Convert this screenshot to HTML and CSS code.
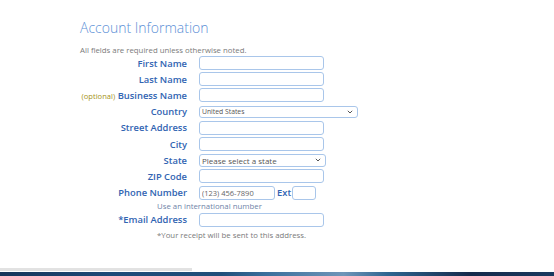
FILE: index.html
```html
<!DOCTYPE html>
<html lang="en">
<head>
    <meta charset="UTF-8">
    <meta name="viewport" content="width=device-width, initial-scale=1.0">
    <title>Checkout - Account Information</title>
    <link rel="stylesheet" href="styles.css">
</head>
<body>
    <div class="page">
        <div class="content">
            <h2 class="title">Account Information</h2>
            <p class="intro">All fields are required unless otherwise noted.</p>

            <form class="account-form">
                <label class="field-label">First Name</label>
                <div class="field"><input type="text" class="input"></div>

                <label class="field-label">Last Name</label>
                <div class="field"><input type="text" class="input"></div>

                <label class="field-label"><span class="optional">(optional)</span> Business Name</label>
                <div class="field"><input type="text" class="input"></div>

                <label class="field-label">Country</label>
                <div class="field">
                    <span class="select-wrap">
                        <select class="select select-small">
                            <option>United States</option>
                        </select>
                        <svg class="chevron" width="6" height="4" viewBox="0 0 6 4"><path d="M0.8 0.8 L3 3 L5.2 0.8" fill="none" stroke="#555" stroke-width="1"/></svg>
                    </span>
                </div>

                <label class="field-label">Street Address</label>
                <div class="field"><input type="text" class="input"></div>

                <label class="field-label">City</label>
                <div class="field"><input type="text" class="input"></div>

                <label class="field-label">State</label>
                <div class="field">
                    <span class="select-wrap">
                        <select class="select">
                            <option>Please select a state</option>
                        </select>
                        <svg class="chevron" width="6" height="4" viewBox="0 0 6 4"><path d="M0.8 0.8 L3 3 L5.2 0.8" fill="none" stroke="#555" stroke-width="1"/></svg>
                    </span>
                </div>

                <label class="field-label">ZIP Code</label>
                <div class="field"><input type="text" class="input"></div>

                <label class="field-label">Phone Number</label>
                <div class="field phone-field">
                    <input type="text" class="input input-phone" placeholder="(123) 456-7890">
                    <span class="ext-label">Ext</span>
                    <input type="text" class="input input-ext">
                </div>

                <div class="help-text">Use an international number</div>

                <label class="field-label">*Email Address</label>
                <div class="field"><input type="text" class="input"></div>

                <div class="help-text receipt-note">*Your receipt will be sent to this address.</div>
            </form>
        </div>

        <div class="scroll-track"></div>
        <div class="banner-strip"></div>
    </div>
</body>
</html>
```

FILE: styles.css
```css
body {
    margin: 0;
    font-family: "Open Sans", "Noto Sans", Arial, sans-serif;
    background-color: #fff;
}
.page {
    height: 276px;
    display: flex;
    flex-direction: column;
    overflow: hidden;
}
.content {
    flex: 1;
    padding: 0 0 0 80px;
}
.title {
    margin: 18px 0 0 0;
    font-size: 14px;
    font-weight: 300;
    color: #5b8fd6;
    line-height: 20px;
}
.intro {
    margin: 7px 0 0 0;
    font-size: 7.8px;
    color: #7a7a7a;
    line-height: 10px;
}
.account-form {
    display: grid;
    grid-template-columns: 107px auto;
    column-gap: 12px;
    align-items: center;
}
.field-label {
    text-align: right;
    font-size: 9.4px;
    font-weight: 600;
    color: #3164b2;
    white-space: nowrap;
}
.field-label .optional {
    font-size: 7.6px;
    font-weight: 400;
    color: #a59318;
}
.field {
    height: 16.2px;
    display: flex;
    align-items: center;
}
.input {
    box-sizing: border-box;
    width: 125px;
    height: 14px;
    border: 1px solid #a9c6ea;
    border-radius: 3px;
    padding: 0 2px;
    font-family: inherit;
    font-size: 7.5px;
    color: #555;
    outline: none;
}
.input::placeholder {
    color: #666;
}
.input-phone {
    width: 76px;
}
.ext-label {
    margin: 0 1px 0 2px;
    font-size: 9.4px;
    font-weight: 600;
    color: #3164b2;
}
.input-ext {
    width: 24px;
}
.select-wrap {
    position: relative;
    display: flex;
    align-items: center;
}
.select {
    box-sizing: border-box;
    appearance: none;
    -webkit-appearance: none;
    width: 127px;
    height: 13px;
    border: 1px solid #a9c6ea;
    border-radius: 3px;
    padding: 0 2px;
    background-color: #fff;
    font-family: inherit;
    font-size: 8px;
    color: #555;
    outline: none;
}
.select-small {
    width: 159px;
    height: 12px;
    font-size: 6.8px;
}
.chevron {
    position: absolute;
    right: 5px;
    top: 50%;
    margin-top: -2px;
}
.help-text {
    grid-column: 1 / 3;
    margin-left: 77px;
    font-size: 7.8px;
    color: #6f84a8;
    height: 11px;
    line-height: 11px;
}
.receipt-note {
    color: #7a7a7a;
    margin-top: 2px;
}
.scroll-track {
    width: 192px;
    height: 3px;
    margin-bottom: 1px;
    background-color: #e2e2e2;
}
.banner-strip {
    height: 4px;
    background: linear-gradient(90deg, #16355a 0%, #1d4a78 20%, #214f7a 40%, #3a6f9c 48%, #6f95b8 62%, #2e6590 70%, #15294a 85%, #1a3a60 100%);
}
```
